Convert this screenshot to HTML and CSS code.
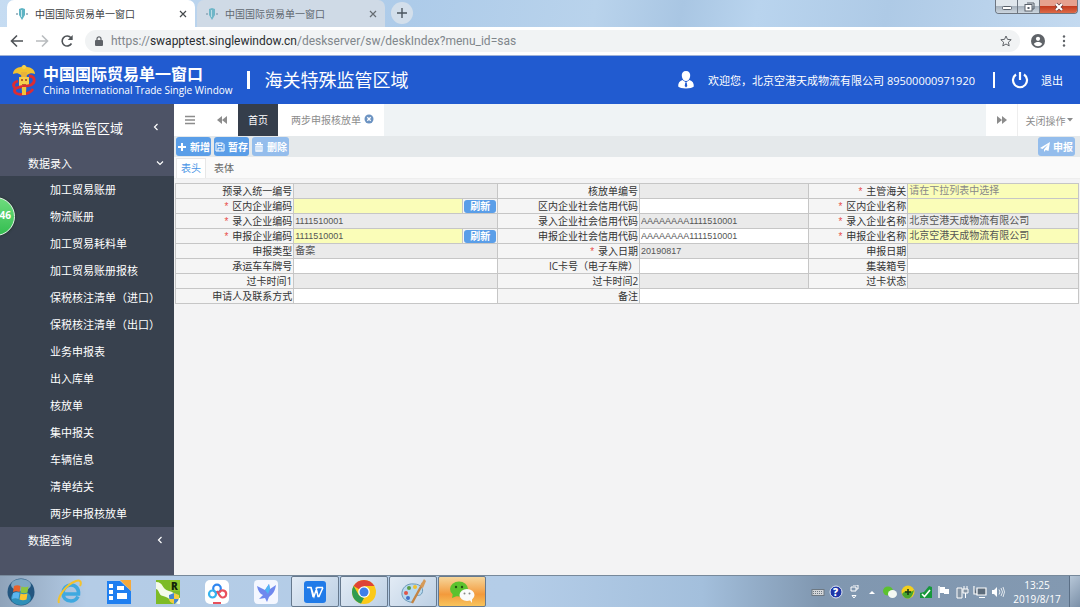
FILE: index.html
```html
<!DOCTYPE html>
<html lang="zh-CN">
<head>
    <meta charset="UTF-8">
    <meta name="viewport" content="width=device-width, initial-scale=1.0">
    <title>中国国际贸易单一窗口</title>
    <link rel="stylesheet" href="styles.css">
</head>
<body>
    <!-- browser window -->
    <div class="tab-strip">
        <div class="browser-tab active">
            <svg class="favicon" viewBox="0 0 14 14"><path d="M4 2l3-1 3 1v6l-3 5-3-5z" fill="#5fb4c4"/><path d="M6 3h1v7H6z" fill="#c5e6ec"/><path d="M1 6h2v2H1zM11 6h2v2h-2z" fill="#a8bcc8"/></svg>
            <span>中国国际贸易单一窗口</span>
            <button type="button" class="tab-close" aria-label="关闭标签页"><svg viewBox="0 0 8 8"><path d="M1 1l6 6M7 1L1 7" stroke="#45494d" stroke-width="1.2"/></svg></button>
        </div>
        <div class="browser-tab">
            <svg class="favicon" viewBox="0 0 14 14"><path d="M4 2l3-1 3 1v6l-3 5-3-5z" fill="#6fb6c8"/><path d="M6 3h1v7H6z" fill="#b9dbe4"/><path d="M1 6h2v2H1zM11 6h2v2h-2z" fill="#9fb4c4"/></svg>
            <span>中国国际贸易单一窗口</span>
            <button type="button" class="tab-close" aria-label="关闭标签页"><svg viewBox="0 0 8 8"><path d="M1 1l6 6M7 1L1 7" stroke="#666c72" stroke-width="1.2"/></svg></button>
        </div>
        <button type="button" class="new-tab" aria-label="新标签页"><svg viewBox="0 0 10 10"><path d="M5 0v10M0 5h10" stroke="#4a545e" stroke-width="1.4"/></svg></button>
        <div class="window-controls">
            <button type="button" aria-label="最小化"><svg viewBox="0 0 12 10"><rect x="1.5" y="4.500" width="9" height="3" rx="1" fill="#fff" stroke="#59616b"/></svg></button>
            <button type="button" aria-label="还原"><svg viewBox="0 0 12 10"><path d="M4 1h7v6H9" fill="none" stroke="#59616b"/><rect x="2" y="2.500" width="7" height="6.500" fill="#fff" stroke="#59616b"/><path d="M4.500 5h2v2h-2z" fill="#59616b"/></svg></button>
            <button type="button" class="win-close" aria-label="关闭"><svg viewBox="0 0 12 10"><path d="M3 2l6 6M9 2L3 8" stroke="#6b3a3a" stroke-width="3.600"/><path d="M3 2l6 6M9 2L3 8" stroke="#fff" stroke-width="2.200"/></svg></button>
        </div>
    </div>

    <div class="toolbar">
        <button type="button" aria-label="后退"><svg viewBox="0 0 14 14"><path d="M13 7H2M7 1.500L1.500 7 7 12.500" fill="none" stroke="#4f5357" stroke-width="1.600"/></svg></button>
        <button type="button" aria-label="前进"><svg viewBox="0 0 14 14"><path d="M1 7h11M7 1.500L12.500 7 7 12.500" fill="none" stroke="#b9bcbf" stroke-width="1.600"/></svg></button>
        <button type="button" aria-label="刷新"><svg viewBox="0 0 14 14"><path d="M11.500 9.500A5 5 0 1 1 11 3.800" fill="none" stroke="#4f5357" stroke-width="1.600"/><path d="M12.700 1v5h-5z" fill="#4f5357"/></svg></button>
        <div class="address">
            <svg class="lock" viewBox="0 0 8 10"><rect y="4" width="8" height="6" rx="1" fill="#5f6368"/><path d="M2 4V2.800a2 2 0 0 1 4 0V4" fill="none" stroke="#5f6368" stroke-width="1.200"/></svg>
            <span class="url">https://<b>swapptest.singlewindow.cn</b>/deskserver/sw/deskIndex?menu_id=sas</span>
            <svg class="star" viewBox="0 0 12 12"><path d="M6 1l1.500 3.400 3.700.3-2.800 2.500.8 3.700L6 9l-3.200 1.900.8-3.700L.8 4.700l3.700-.3z" fill="none" stroke="#5f6368"/></svg>
        </div>
        <svg class="profile" viewBox="0 0 14 14"><circle cx="7" cy="7" r="7" fill="#5f6368"/><circle cx="7" cy="4.800" r="2.100" fill="#fff"/><path d="M2.800 10c1-1.400 2.600-1.900 4.200-1.900s3.200.5 4.200 1.900a5 5 0 0 1-8.400 0z" fill="#fff"/></svg>
        <svg class="kebab" viewBox="0 0 4 12"><circle cx="2" cy="1.500" r="1.200" fill="#5f6368"/><circle cx="2" cy="6" r="1.200" fill="#5f6368"/><circle cx="2" cy="10.500" r="1.200" fill="#5f6368"/></svg>
    </div>

    <!-- site header -->
    <header class="site-header">
        <svg class="emblem" viewBox="0 0 24 32">
            <path d="M12 1L9 3C5 3 1 6 1 10c3-1 5-1 8 1h6c3-2 5-2 8-1 0-4-4-7-8-7z" fill="#f2c230"/>
            <path d="M9 8h6l-1 22h-4z" fill="#e8b33a"/>
            <path d="M7 13h10v9H7z" fill="#f5cf4c"/>
            <path d="M9 15h2v2H9zM13 15h2v2h-2zM10 20h4v1h-4z" fill="#b5602a"/>
            <path d="M17 12c6 0 7 6 2 9-5 2-13 1-16 4-2 4 3 6 8 5 5 0 8-2 10-5M6 17c-4 1-6 4-3 7" fill="none" stroke="#dc2c33" stroke-width="2.800"/>
            <path d="M10 23h4v8h-4z" fill="#f0c43a"/>
            <circle cx="12" cy="3" r="2" fill="#f6d24d"/>
        </svg>
        <div class="brand">
            <strong>中国国际贸易单一窗口</strong>
            <span>China International Trade Single Window</span>
        </div>
        <i class="bar"></i>
        <h1>海关特殊监管区域</h1>
        <div class="user">
            <svg class="user-icon" viewBox="0 0 16 18"><path d="M8 0c3 0 4.500 2 4.200 5C12 8 10 10 8 10S4 8 3.800 5C3.500 2 5 0 8 0z" fill="#fff"/><path d="M4.500 9L8 11.500 11.500 9c3 1 4.500 3 4.300 6.500C14 18 2 18 .2 15.500 0 12 1.500 10 4.500 9z" fill="#fff"/><path d="M7.300 11.500h1.400l.6 3.500L8 16.500 6.700 15z" fill="#215bd0"/></svg>
            <span>欢迎您，北京空港天成物流有限公司 89500000971920</span>
            <i class="bar small"></i>
            <a href="#" class="logout"><svg viewBox="0 0 18 18"><path d="M5 3.500a7 7 0 1 0 8 0M9 1v8" fill="none" stroke="#fff" stroke-width="2.200"/></svg>退出</a>
        </div>
    </header>

    <div class="workspace">
        <nav class="sidebar">
            <a href="#" class="side-title">海关特殊监管区域<svg viewBox="0 0 8 8"><path d="M5.500 1l-3 3 3 3" fill="none" stroke="#fff" stroke-width="1.200"/></svg></a>
            <a href="#" class="side-group">数据录入<svg viewBox="0 0 8 8"><path d="M1 2.500l3 3 3-3" fill="none" stroke="#fff" stroke-width="1.200"/></svg></a>
            <ul>
                <li><a href="#">加工贸易账册</a></li>
                <li><a href="#">物流账册</a></li>
                <li><a href="#">加工贸易耗料单</a></li>
                <li><a href="#">加工贸易账册报核</a></li>
                <li><a href="#">保税核注清单（进口）</a></li>
                <li><a href="#">保税核注清单（出口）</a></li>
                <li><a href="#">业务申报表</a></li>
                <li><a href="#">出入库单</a></li>
                <li><a href="#">核放单</a></li>
                <li><a href="#">集中报关</a></li>
                <li><a href="#">车辆信息</a></li>
                <li><a href="#">清单结关</a></li>
                <li><a href="#">两步申报核放单</a></li>
            </ul>
            <a href="#" class="side-group">数据查询<svg viewBox="0 0 8 8"><path d="M5.500 1l-3 3 3 3" fill="none" stroke="#fff" stroke-width="1.200"/></svg></a>
            <div class="float-ball">46</div>
        </nav>

        <main>
            <div class="page-tabs">
                <button type="button" class="icon-cell" aria-label="菜单"><svg viewBox="0 0 10 10"><path d="M0 1.500h10M0 5h10M0 8.500h10" stroke="#8c8c8c" stroke-width="1.400"/></svg></button>
                <button type="button" class="icon-cell" aria-label="向左"><svg viewBox="0 0 10 10"><path d="M5 1v8L0 5zM10 1v8L5 5z" fill="#8c8c8c"/></svg></button>
                <a href="#" class="page-tab home">首页</a>
                <a href="#" class="page-tab">两步申报核放单<svg viewBox="0 0 10 10"><circle cx="5" cy="5" r="4.500" fill="#6c93c2"/><path d="M3.300 3.300l3.400 3.400M6.700 3.300L3.300 6.700" stroke="#fff" stroke-width="1.300"/></svg></a>
                <button type="button" class="icon-cell forward" aria-label="向右"><svg viewBox="0 0 10 10"><path d="M0 1v8l5-4zM5 1v8l5-4z" fill="#8c8c8c"/></svg></button>
                <button type="button" class="close-menu">关闭操作<svg viewBox="0 0 6 4"><path d="M0 0h6L3 3.500z" fill="#8c8c8c"/></svg></button>
            </div>

            <div class="actions">
                <button type="button" class="btn"><svg viewBox="0 0 10 10"><path d="M5 1v8M1 5h8" stroke="#fff" stroke-width="2"/></svg>新增</button>
                <button type="button" class="btn"><svg viewBox="0 0 10 10"><path d="M1 1h6.500L9 2.500V9H1zM3 1v2.500h4V1M3 9V6h4v3" fill="none" stroke="#fff"/></svg>暂存</button>
                <button type="button" class="btn" disabled><svg viewBox="0 0 10 10"><path d="M1 2.500h8M3.500 2V.8h3V2M2 4h6v5.200H2zM4 4v5M6 4v5" fill="none" stroke="#fff" stroke-width="1.200"/></svg>删除</button>
                <button type="button" class="btn submit" disabled><svg viewBox="0 0 10 10"><path d="M10 0L0 6l2.500 1L8 2.500 4 7.500V10l1.700-2L8.500 9z" fill="#fff"/></svg>申报</button>
            </div>

            <div class="form-tabs">
                <a href="#" class="active">表头</a>
                <a href="#">表体</a>
            </div>

            <form>
                <table>
                    <colgroup>
                        <col class="c1"><col class="c2"><col class="c3"><col class="c4"><col class="c5"><col class="c6">
                    </colgroup>
                    <tr>
                        <th><label for="preNo">预录入统一编号</label></th>
                        <td><input id="preNo" readonly></td>
                        <th><label for="passNo">核放单编号</label></th>
                        <td><input id="passNo" readonly></td>
                        <th class="must"><label for="customs">主管海关</label></th>
                        <td><input id="customs" class="key" placeholder="请在下拉列表中选择"></td>
                    </tr>
                    <tr>
                        <th class="must"><label for="areaCode">区内企业编码</label></th>
                        <td><div class="with-btn"><input id="areaCode" class="key code"><button type="button">刷新</button></div></td>
                        <th><label for="areaCredit">区内企业社会信用代码</label></th>
                        <td><input id="areaCredit" class="code"></td>
                        <th class="must"><label for="areaName">区内企业名称</label></th>
                        <td><input id="areaName" class="key"></td>
                    </tr>
                    <tr>
                        <th class="must"><label for="inputCode">录入企业编码</label></th>
                        <td><input id="inputCode" class="code" value="1111510001" readonly></td>
                        <th><label for="inputCredit">录入企业社会信用代码</label></th>
                        <td><input id="inputCredit" class="code" value="AAAAAAAA1111510001" readonly></td>
                        <th class="must"><label for="inputName">录入企业名称</label></th>
                        <td><input id="inputName" value="北京空港天成物流有限公司" readonly></td>
                    </tr>
                    <tr>
                        <th class="must"><label for="declCode">申报企业编码</label></th>
                        <td><div class="with-btn"><input id="declCode" class="key code" value="1111510001"><button type="button">刷新</button></div></td>
                        <th><label for="declCredit">申报企业社会信用代码</label></th>
                        <td><input id="declCredit" class="code" value="AAAAAAAA1111510001"></td>
                        <th class="must"><label for="declName">申报企业名称</label></th>
                        <td><input id="declName" class="key" value="北京空港天成物流有限公司"></td>
                    </tr>
                    <tr>
                        <th><label for="declType">申报类型</label></th>
                        <td><input id="declType" value="备案" readonly></td>
                        <th class="must"><label for="inputDate">录入日期</label></th>
                        <td><input id="inputDate" class="code" value="20190817" readonly></td>
                        <th><label for="declDate">申报日期</label></th>
                        <td><input id="declDate" readonly></td>
                    </tr>
                    <tr>
                        <th><label for="plate">承运车车牌号</label></th>
                        <td><input id="plate"></td>
                        <th><label for="icCard">IC卡号（电子车牌）</label></th>
                        <td><input id="icCard"></td>
                        <th><label for="container">集装箱号</label></th>
                        <td><input id="container"></td>
                    </tr>
                    <tr>
                        <th><label for="pass1">过卡时间1</label></th>
                        <td><input id="pass1" readonly></td>
                        <th><label for="pass2">过卡时间2</label></th>
                        <td><input id="pass2" readonly></td>
                        <th><label for="passState">过卡状态</label></th>
                        <td><input id="passState" readonly></td>
                    </tr>
                    <tr>
                        <th><label for="contact">申请人及联系方式</label></th>
                        <td><input id="contact"></td>
                        <th><label for="remark">备注</label></th>
                        <td colspan="3"><input id="remark"></td>
                    </tr>
                </table>
            </form>
        </main>
    </div>

    <!-- taskbar -->
    <footer class="taskbar">
        <button type="button" class="start" aria-label="开始"><svg viewBox="0 0 28 28">
            <circle cx="14" cy="14" r="13.500" fill="#24567f"/><ellipse cx="14" cy="20" rx="10" ry="7" fill="#2f8fb8"/><ellipse cx="14" cy="7" rx="10" ry="6" fill="#7ea6c2"/>
            <path d="M7 8c2-1 4.500-1 6.500 0L12.500 14c-2-1-4.500-1-6.500 0z" fill="#e8632c"/><path d="M14.500 8.500c2 1 5 1 7 0l-1 6c-2 1-5 1-7 0z" fill="#8dc63f"/><path d="M6 15c2-1 4.500-1 6.500 0l-1 6c-2-1-4.500-1-6.500 0z" fill="#5bb5ee"/><path d="M13.500 15.500c2 1 4.500 1 7 0l-1 6c-2 1-5 1-7 0z" fill="#fbc62e"/>
        </svg></button>
        <button type="button" class="app" aria-label="Internet Explorer"><svg viewBox="0 0 26 26"><path d="M21 17.500c-1.500 3-4 4.500-7 4.500-5 0-8-3.500-8-8s3.500-8 8-8 8 3.500 7.500 9H7" fill="none" stroke="#3fa9e0" stroke-width="3.600"/><path d="M2 24C0 19 8 6 19 2c4-1.500 6 1 4 5" fill="none" stroke="#f3c22d" stroke-width="2"/></svg></button>
        <button type="button" class="app" aria-label="视频"><svg viewBox="0 0 26 26"><path d="M1 2h13l11 10v13H1z" fill="#1f7ff0"/><path d="M14 1h11v11z" fill="#f6a93b"/><path d="M3 5h4v4H3zM3 11h4v4H3zM3 17h4v4H3zM11 7h7v4h-7zM11 14h10v6H11z" fill="#fff"/></svg></button>
        <button type="button" class="app" aria-label="R"><svg viewBox="0 0 26 26"><path d="M1 1h24v24H1z" fill="#7dbb26"/><path d="M1 3c8 0 5 7 13 9s5 6 11 7v6C15 25 17 19 8 17 3 16 5 11 1 10z" fill="#f4faea"/><path d="M15 1h10v11H15z" fill="#8fc62c"/><text x="16" y="11" class="r-mark">R</text><path d="M19 14l5 2c0 5-1 7-5 9-4-2-5-4-5-9z" fill="#4686cf"/><path d="M19 14l5 2v4h-5zM14 20h5v5c-3-1-5-3-5-5z" fill="#f4cf3c"/></svg></button>
        <button type="button" class="app" aria-label="网盘"><svg viewBox="0 0 26 26"><rect x="1" y="1" width="24" height="24" rx="5" fill="#fff"/><circle cx="13" cy="9.500" r="3.800" fill="none" stroke="#2f86f0" stroke-width="2.200"/><circle cx="8.500" cy="15" r="3.500" fill="none" stroke="#35b3ee" stroke-width="2.200"/><path d="M13 12c2 3 3 6.500 5.500 6.500a3.500 3.500 0 1 0-3-5" fill="none" stroke="#e8515c" stroke-width="2.200"/><path d="M9 24h8" stroke="#e8515c" stroke-width="2"/></svg></button>
        <button type="button" class="app" aria-label="迅雷"><svg viewBox="0 0 26 26"><rect x="1" y="1" width="24" height="24" rx="4" fill="#f4f7ff"/><path d="M4 7l8 4 4-6 1 5 6-4c-1 6-3 9-7 12l-2 5-2-4-6 1 4-4c-3-1-5-4-6-9z" fill="#6f88ee"/><path d="M12 11l4-6 1 5-2 5z" fill="#4fb6f4"/></svg></button>
        <button type="button" class="app open" aria-label="WPS"><svg viewBox="0 0 26 26"><rect x="2" y="2" width="22" height="22" rx="3" fill="#217be8"/><path d="M5 8.500h4l3 9 3-9h6M9 8.500l2 9h1.500M14 8.500l2 9h1l4-9" fill="none" stroke="#fff" stroke-width="1.500"/></svg></button>
        <button type="button" class="app open" aria-label="Chrome"><svg viewBox="0 0 26 26"><circle cx="13" cy="13" r="12" fill="#fbc918"/><path d="M13 13L2.600 7A12 12 0 0 1 23.400 7H13z" fill="#de4336"/><path d="M10 24.600A12 12 0 0 1 2.600 7l5.200 9L13 19z" fill="#2f9c50"/><circle cx="13" cy="13" r="5.800" fill="#fff"/><circle cx="13" cy="13" r="4.500" fill="#3f7fe8"/></svg></button>
        <button type="button" class="app open" aria-label="画图"><svg viewBox="0 0 26 26"><path d="M2 16C1 9 7 4 14 5c7 0 10 5 8 9s-5 1-7 4-1 6-5 5-7-3-8-7z" fill="#b8d8ee" stroke="#6c9ab8"/><circle cx="6" cy="14" r="2" fill="#e05548"/><circle cx="9" cy="9" r="2" fill="#5a9d46"/><circle cx="15" cy="8" r="2" fill="#f0c02f"/><circle cx="8" cy="19" r="2" fill="#4271c8"/><path d="M23 4L12 24" stroke="#c48443" stroke-width="2.400"/><path d="M24 0l-4 7 3 2 3-7z" fill="#d69a58"/></svg></button>
        <button type="button" class="app open alert" aria-label="微信"><svg viewBox="0 0 26 26"><ellipse cx="10" cy="10" rx="9" ry="7.500" fill="#5cc22f"/><path d="M4 14l-1 5 5-2z" fill="#5cc22f"/><ellipse cx="18" cy="16" rx="7.500" ry="6" fill="#fafafa"/><path d="M20 20l3 4v-4z" fill="#fafafa"/><circle cx="7" cy="8" r="1.200" fill="#245212"/><circle cx="13" cy="8" r="1.200" fill="#245212"/><circle cx="15.500" cy="14.500" r="1" fill="#888"/><circle cx="20.500" cy="14.500" r="1" fill="#888"/></svg></button>

        <div class="tray">
            <svg viewBox="0 0 14 14"><rect x="1" y="4.500" width="12" height="6" fill="#d3d6d9" stroke="#6d7882"/><path d="M2 6.500h10M2 8.500h10" stroke="#6d7882" stroke-dasharray="1 1"/></svg>
            <svg viewBox="0 0 14 14"><circle cx="7" cy="7" r="6" fill="#1d36a8" stroke="#dfe6f4"/><text x="4" y="11" class="help-mark">?</text></svg>
            <svg viewBox="0 0 14 14"><path d="M6 0h5v4H9M4 2h5v4H4zM5 10.500h4L7 13z" fill="none" stroke="#fff"/></svg>
            <svg viewBox="0 0 14 14"><path d="M4 9l3-3 3 3z" fill="#fff"/></svg>
            <svg viewBox="0 0 14 14"><ellipse cx="5" cy="6" rx="5" ry="4.500" fill="#5cc22f"/><ellipse cx="9.500" cy="9" rx="4.500" ry="4" fill="#f4f8f2"/></svg>
            <svg viewBox="0 0 14 14"><circle cx="7" cy="7" r="6.500" fill="#f2cf1d"/><path d="M1 9c4-6 8 0 12-4-1 5-3 8-6 8.500-3 0-5-2-6-4.500z" fill="#48a52e"/><path d="M7 4v6M4 7h6" stroke="#1b3a12" stroke-width="1.600"/></svg>
            <svg viewBox="0 0 14 14"><path d="M1 8l4-1 5-6 3 1v11H1z" fill="#17983b"/><path d="M3 9l2.500 2.500L11 5" fill="none" stroke="#fff" stroke-width="1.600"/></svg>
            <svg viewBox="0 0 14 14"><path d="M2 1v12" stroke="#fff" stroke-width="1.400"/><path d="M3 2h5v2h4v5H7V8H3z" fill="#fff"/></svg>
            <svg viewBox="0 0 14 14"><path d="M2 3h5v10H2zM8 4h5v4h-5zM9 1v3M12 1v3M10.500 8v5" fill="#8595a5" stroke="#fff"/></svg>
            <svg viewBox="0 0 14 14"><path d="M4 3h9v7H4zM6 12.500h6M1 1v8h3" fill="#5d6c7b" stroke="#fff" stroke-width="1.200"/></svg>
            <svg viewBox="0 0 14 14"><path d="M1 5h2l3-3v10L3 9H1z" fill="#fff"/><path d="M8 4.500q2 2.500 0 5M10 3q3 4 0 8M12 2q3 5 0 10" fill="none" stroke="#e3e9ef"/></svg>
        </div>
        <div class="clock"><span>13:25</span><span>2019/8/17</span></div>
        <button type="button" class="show-desktop" aria-label="显示桌面"></button>
    </footer>
</body>
</html>
```
FILE: styles.css
```css
* {
    box-sizing: border-box;
}

body {
    margin: 0;
    min-height: 100vh;
    display: flex;
    flex-direction: column;
    font-family: "Open Sans", "Noto Sans CJK SC", sans-serif;
    font-size: 10px;
    color: #333;
    background: #f3f3f4;
}

button {
    padding: 0;
    border: 0;
    background: none;
    font: inherit;
    color: inherit;
    display: flex;
    align-items: center;
    justify-content: center;
}

a {
    color: inherit;
    text-decoration: none;
}

svg {
    display: block;
    flex: none;
}

/* browser window */
.tab-strip {
    display: flex;
    align-items: flex-end;
    gap: 2px;
    height: 27px;
    padding: 0 2px 0 7px;
    background: linear-gradient(100deg, #c6dcf2 0%, #adcbe9 38%, #b9d3ec 55%, #a9c6e3 63%, #b9d4ee 70%, #aecae6 82%, #c4daf0 100%);
}

.browser-tab {
    display: flex;
    align-items: center;
    gap: 6px;
    width: 188px;
    height: 27px;
    padding: 0 8px;
    border-radius: 7px 7px 0 0;
    background: #cfdae6;
    color: #5f6870;
}

.browser-tab.active {
    background: #fff;
    color: #3c4043;
}

.favicon {
    width: 14px;
    height: 14px;
}

.tab-close {
    margin-left: auto;
}

.tab-close svg {
    width: 8px;
    height: 8px;
}

.new-tab {
    width: 22px;
    height: 22px;
    margin: 0 0 3px 4px;
    border-radius: 50%;
    background: #d3dfeb;
}

.new-tab svg {
    width: 10px;
    height: 10px;
}

.window-controls {
    display: flex;
    align-self: flex-start;
    margin-left: auto;
    border: 1px solid #6d7681;
    border-top: 0;
    border-radius: 0 0 4px 4px;
    overflow: hidden;
}

.window-controls button {
    width: 22px;
    height: 13px;
    border-right: 1px solid #6d7681;
    background: linear-gradient(#dfe6ec 45%, #a9b4bf 50%, #ccd6df);
}

.window-controls .win-close {
    width: 37px;
    border-right: 0;
    background: linear-gradient(#e6a18f 45%, #c43c20 50%, #dd6a48);
}

.window-controls svg {
    width: 12px;
    height: 10px;
}

.toolbar {
    display: flex;
    align-items: center;
    gap: 11px;
    height: 29px;
    padding: 0 14px 0 10px;
    background: #fff;
    border-bottom: 1px solid #9fb2d8;
}

.toolbar button svg,
.profile {
    width: 14px;
    height: 14px;
}

.address {
    flex: 1;
    display: flex;
    align-items: center;
    gap: 8px;
    height: 22px;
    padding: 0 8px 0 10px;
    border-radius: 11px;
    background: #f1f3f4;
    color: #80868b;
}

.url {
    flex: 1;
    font-family: Roboto, "Open Sans", sans-serif;
    font-size: 12px;
}

.url b {
    font-weight: 400;
    color: #2a2d30;
}

.lock {
    width: 8px;
    height: 10px;
}

.star {
    width: 12px;
    height: 12px;
}

.kebab {
    width: 4px;
    height: 12px;
    margin-left: 6px;
}

/* site header */
.site-header {
    display: flex;
    align-items: center;
    height: 48px;
    padding: 0 17px 0 12px;
    background: #215bd0;
    color: #fff;
}

.emblem {
    width: 24px;
    height: 32px;
}

.brand {
    display: flex;
    flex-direction: column;
    margin: 2px 0 0 7px;
}

.brand strong {
    font-size: 16px;
    line-height: 18px;
}

.brand span {
    font-size: 10px;
    line-height: 14px;
}

.bar {
    width: 3px;
    height: 18px;
    margin: 0 15px 0 14px;
    background: #fff;
}

.site-header h1 {
    margin: 0;
    font-size: 18px;
    font-weight: 400;
    line-height: 24px;
}

.user {
    display: flex;
    align-items: center;
    margin-left: auto;
    font-size: 11px;
}

.user-icon {
    width: 16px;
    height: 18px;
    margin-right: 14px;
}

.bar.small {
    width: 2px;
    height: 16px;
    margin: 0 16px 0 18px;
}

.logout {
    display: flex;
    align-items: center;
    gap: 12px;
}

.logout svg {
    width: 18px;
    height: 18px;
}

/* sidebar */
.workspace {
    flex: 1;
    display: flex;
}

.sidebar {
    position: relative;
    flex: none;
    width: 174px;
    background: #4d5366;
    color: #fff;
    font-size: 11px;
}

.side-title,
.side-group {
    display: flex;
    align-items: center;
    justify-content: space-between;
    height: 26px;
    padding: 0 10px 0 28px;
}

.side-title {
    height: 46px;
    padding: 0 14px 0 19px;
    font-size: 13px;
}

.sidebar svg {
    width: 8px;
    height: 8px;
}

.sidebar ul {
    margin: 0;
    padding: 0;
    list-style: none;
    background: #38414e;
}

.sidebar li a {
    display: block;
    padding-left: 50px;
    line-height: 27px;
}

.float-ball {
    position: absolute;
    left: -24px;
    top: 93px;
    width: 39px;
    height: 39px;
    padding-right: 3px;
    border: 1px solid #e6f5e8;
    border-radius: 50%;
    background: linear-gradient(#6fdc7e, #33bd50);
    box-shadow: 0 0 2px 1px #2c3a3a;
    font-size: 10px;
    font-weight: 700;
    line-height: 34px;
    text-align: right;
}

/* page area */
main {
    flex: 1;
    min-width: 0;
}

.page-tabs {
    display: flex;
    height: 32px;
    background: #eff3f5;
    color: #8c8c8c;
}

.icon-cell {
    width: 32px;
    background: #fff;
}

.page-tabs svg {
    width: 10px;
    height: 10px;
}

.page-tab {
    display: flex;
    align-items: center;
    gap: 3px;
    padding: 0 10px 2px 13px;
    background: #fff;
}

.page-tab.home {
    padding: 0 10px 2px;
    background: #353e4b;
    color: #fff;
}

.icon-cell.forward {
    margin-left: auto;
    border-right: 1px solid #eee;
}

.close-menu {
    gap: 1px;
    width: 62px;
    background: #fff;
}

.page-tabs .close-menu svg {
    width: 6px;
    height: 4px;
}

.actions {
    display: flex;
    align-items: center;
    gap: 3px;
    height: 21px;
    padding: 0 5px 0 2px;
    background: #e5e9eb;
}

.btn {
    gap: 3px;
    height: 19px;
    padding: 0 1px;
    min-width: 35px;
    border-radius: 3px;
    background: #5a9ee8;
    color: #fff;
    font-weight: 700;
}

.btn:disabled {
    min-width: 37px;
    background: #94bdec;
    color: #fff;
}

.btn.submit {
    margin-left: auto;
}

.btn svg {
    width: 10px;
    height: 10px;
}

.form-tabs {
    display: flex;
    height: 22px;
    padding: 1px 2px 0;
    background: #fafafa;
    border-bottom: 1px solid #eee;
}

.form-tabs a {
    padding: 0 9px 0 5px;
    line-height: 20px;
    color: #666;
}

.form-tabs a.active {
    padding: 0 4px;
    margin-right: 3px;
    border: 1px solid #e7e7e7;
    border-bottom: 0;
    background: #fff;
    color: #4a95e6;
    line-height: 18px;
}

form {
    padding: 4px 1px;
}

table {
    width: 100%;
    table-layout: fixed;
    border-collapse: collapse;
}

.c1 { width: 13.1%; }
.c2 { width: 22.6%; }
.c3 { width: 15.7%; }
.c4 { width: 18.7%; }
.c5 { width: 11%; }
.c6 { width: 18.9%; }

th,
td {
    height: 15px;
    padding: 0;
    border: 1px solid #c6c6c6;
    line-height: 14px;
}

th {
    padding-right: 1px;
    background: #f5f5f5;
    font-weight: 400;
    text-align: right;
    white-space: nowrap;
}

th label {
    display: block;
    height: 14px;
}

.must label::before {
    content: "*";
    margin-right: 4px;
    font-family: "Liberation Sans", sans-serif;
    color: #e8504a;
}

input {
    display: block;
    width: 100%;
    height: 14px;
    padding: 0 1px;
    border: 0;
    outline: 0;
    background: #fff;
    font-family: "Liberation Sans", "Noto Sans CJK SC", sans-serif;
    font-size: 10px;
    line-height: 14px;
    color: #555;
}

input[readonly] {
    background: #eaeaea;
}

input.key {
    background: #fafdb8;
}

input.code {
    font-size: 9px;
}

input::placeholder {
    color: #888;
}

.with-btn {
    display: flex;
    align-items: center;
    background: #f5f5f5;
}

.with-btn input {
    flex: 1;
    width: 0;
    border-right: 1px solid #c6c6c6;
}

.with-btn button {
    width: 32px;
    height: 13px;
    margin: 0 1px;
    border-radius: 3px;
    background: #5a9ee8;
    color: #fff;
    font-weight: 700;
    line-height: 13px;
}

/* taskbar */
.taskbar {
    display: flex;
    align-items: stretch;
    gap: 1px;
    height: 32px;
    border-top: 1px solid #77899b;
    background: linear-gradient(90deg, #8fa3ba 0%, #b4cce6 8%, #b4cde8 48%, #a3bfdc 65%, #8097b0 76%, #8399b1 100%);
}

.start {
    width: 45px;
    padding-right: 3px;
}

.start svg {
    width: 28px;
    height: 28px;
}

.app {
    width: 48px;
    border: 1px solid transparent;
}

.app svg {
    width: 26px;
    height: 26px;
}

.r-mark,
.help-mark {
    font-size: 10px;
    font-weight: 800;
    fill: #122408;
}

.help-mark {
    fill: #fff;
}

.app.open {
    border-color: #66798e;
    border-radius: 2px;
    background: linear-gradient(135deg, #e2ebf5, #bdd0e4);
}

.app.alert {
    background: linear-gradient(#f6d69b, #f39a3c 60%, #f8c45c);
}

.tray {
    display: flex;
    align-items: center;
    gap: 4px;
    margin-left: auto;
}

.tray svg {
    width: 14px;
    height: 14px;
}

.clock {
    display: flex;
    flex-direction: column;
    justify-content: center;
    width: 62px;
    line-height: 14px;
    text-align: center;
    color: #fff;
}

.show-desktop {
    width: 11px;
    border-left: 1px solid #5b6f86;
    background: linear-gradient(135deg, #b7c7d8, #7b90a8);
}
```
